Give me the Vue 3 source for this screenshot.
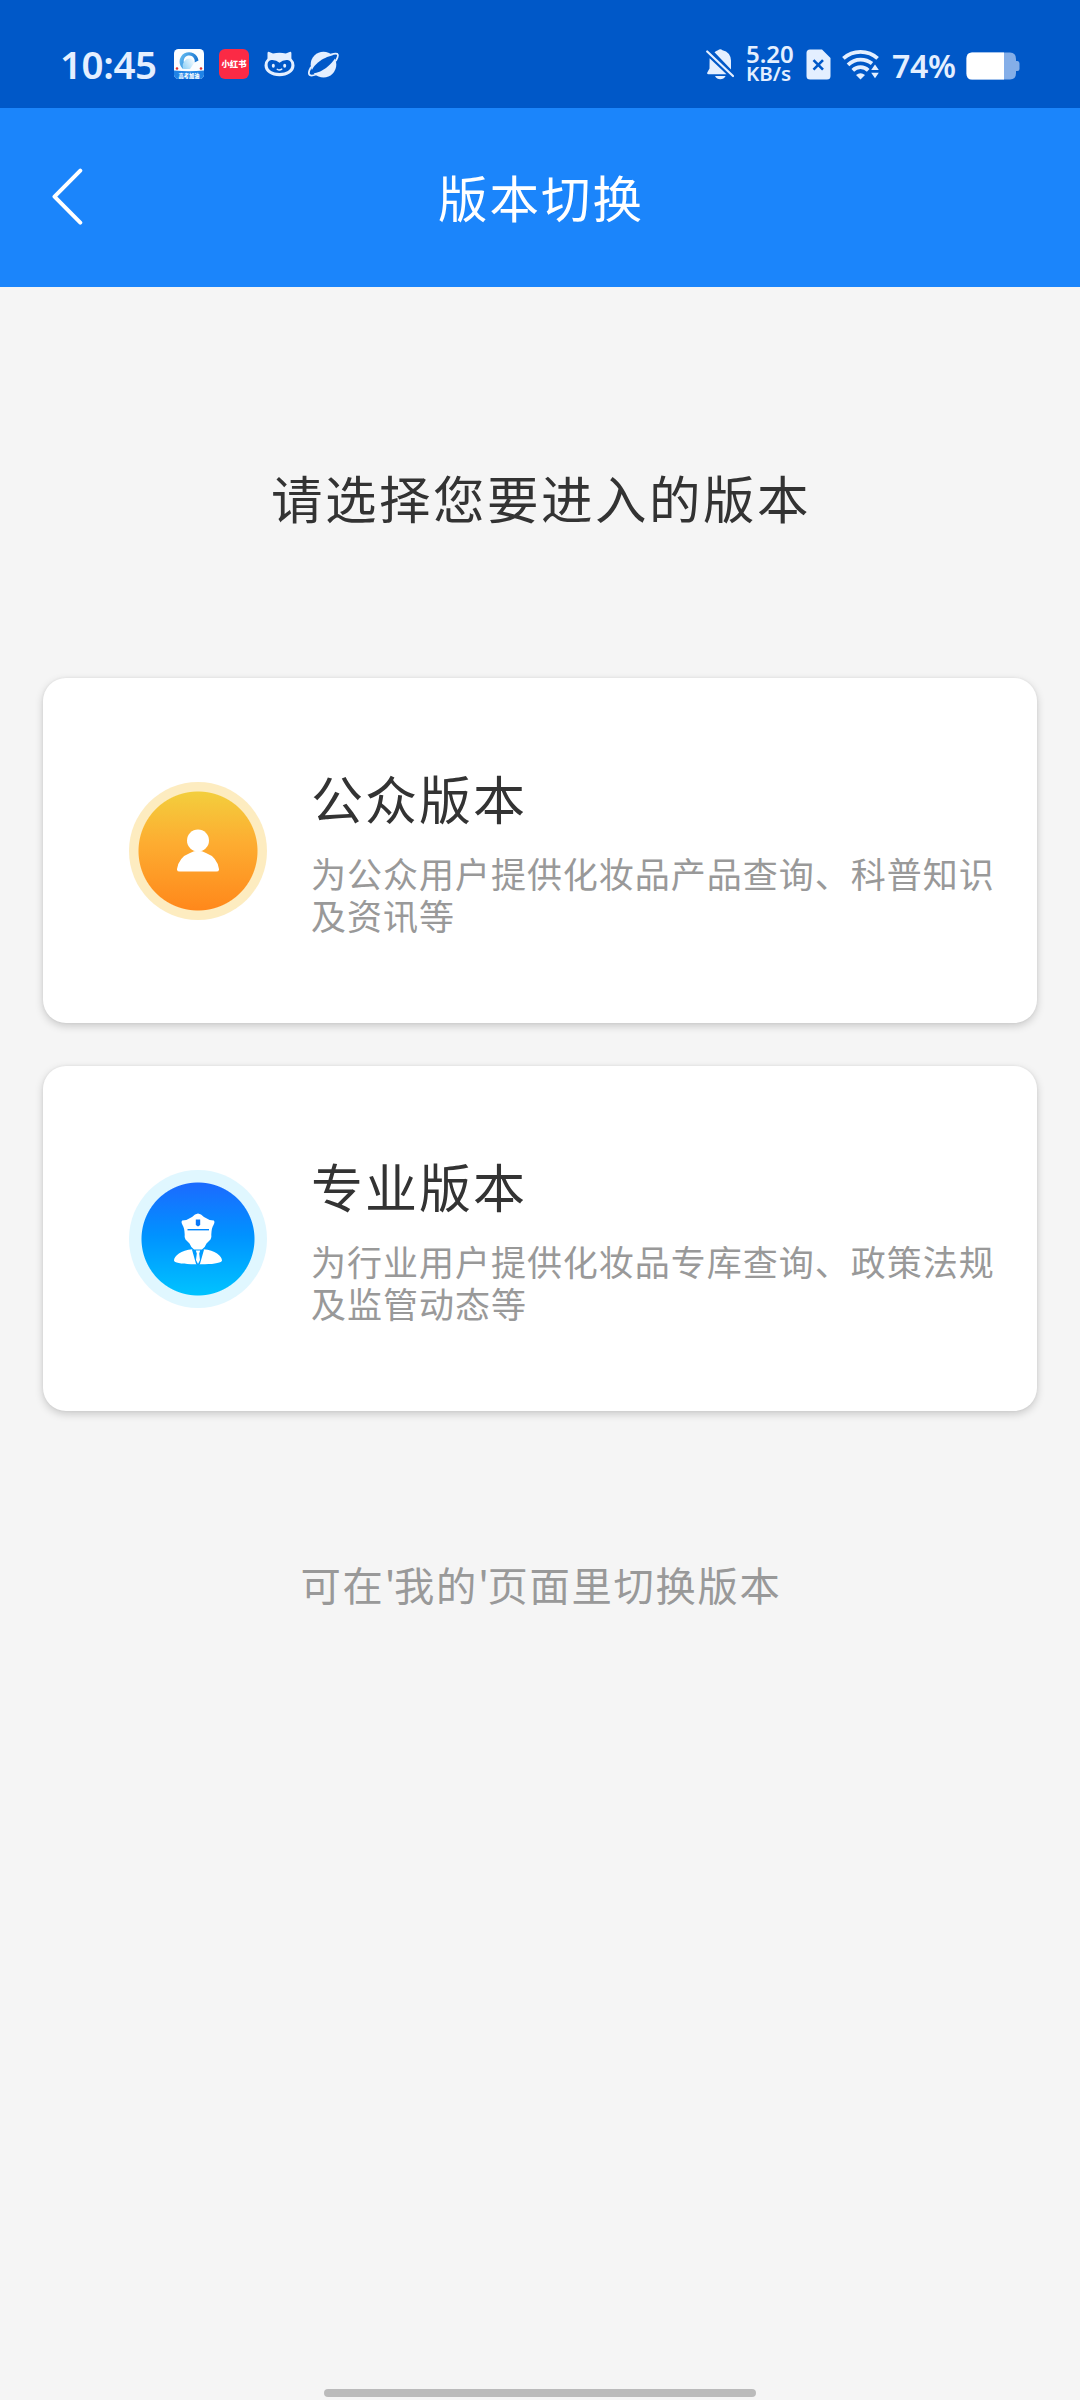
<script setup>
const versions = [
  {
    kind: 'public',
    title: '公众版本',
    desc: '为公众用户提供化妆品产品查询、科普知识及资讯等',
  },
  {
    kind: 'pro',
    title: '专业版本',
    desc: '为行业用户提供化妆品专库查询、政策法规及监管动态等',
  },
]
</script>

<template>
  <div class="page">
    <div class="status">
      <div class="group">
        <span class="time">10:45</span>
        <svg class="app" width="30" height="30" viewBox="0 0 30 30">
          <defs>
            <clipPath id="appClip"><rect width="30" height="30" rx="4.5" /></clipPath>
            <linearGradient id="ring" x1="0" y1="0" x2="1" y2="0.4">
              <stop offset="0" stop-color="#6cc3f5" />
              <stop offset="1" stop-color="#1673cf" />
            </linearGradient>
            <linearGradient id="swirl" x1="1" y1="0" x2="0" y2="0.6">
              <stop offset="0" stop-color="#fff" />
              <stop offset="1" stop-color="#9ad6f8" />
            </linearGradient>
          </defs>
          <g clip-path="url(#appClip)">
            <rect width="30" height="30" fill="#fbfdff" />
            <path d="M9 20A9.500 9.500 0 1 1 24.500 11.500L20.500 13.500A5.500 5.500 0 1 0 11 15.500z" fill="url(#ring)" />
            <path d="M9 20Q7.500 14 12 10.500A5.500 5.500 0 0 1 20.500 13.500L16 20z" fill="url(#swirl)" />
            <circle cx="3" cy="19.500" r="1.300" fill="#e0352f" />
            <circle cx="27" cy="19.500" r="1.300" fill="#e0352f" />
            <path d="M0 21.500Q15 23 30 21.500V30H0z" fill="#2083e6" />
            <text x="15" y="28.600" class="tiny" font-size="5.200" text-anchor="middle" fill="#fff">高考加油</text>
          </g>
        </svg>
        <svg class="red" width="30" height="30" viewBox="0 0 30 30">
          <rect width="30" height="30" rx="6" fill="#fb2a45" />
          <text x="15" y="18.400" class="tiny" font-size="8.400" text-anchor="middle" fill="#fff">小红书</text>
        </svg>
        <svg class="cat" width="31" height="26" viewBox="0 0 31 26">
          <path
            d="M3.500 2.200Q3.600.4 5.300 1L9 2.600Q15.500 1 21.800 2.600L25.600 1Q27.300.4 27.400 2.200V7.500Q30.500 10.500 30.500 14.500C30.500 21 23.500 25.200 15.500 25.200S.5 21 .5 14.500Q.5 10.500 3.500 7.500z"
            fill="#e4efff"
          />
          <path d="M3.600 14C3.600 10 6 9 8.500 9Q12.500 9.300 15.500 11.800Q18.500 9.300 22.500 9C25 9 27.400 10 27.400 14C27.400 19.200 22 22 15.500 22S3.600 19.200 3.600 14z" fill="#0058c8" />
          <ellipse cx="9.300" cy="14.800" rx="1.500" ry="2" fill="#e4efff" />
          <ellipse cx="20.700" cy="14.800" rx="1.500" ry="2" fill="#e4efff" />
          <path d="M13.200 18.300q2.200 1.600 4.600-.2" fill="none" stroke="#e4efff" stroke-width="1.400" stroke-linecap="round" />
        </svg>
        <svg class="planet" width="31" height="28" viewBox="0 0 31 28">
          <circle cx="15.500" cy="13.600" r="12.800" fill="#e4efff" />
          <path d="M28 9.500C30 6 30.600 3.800 29.300 2.900Q27.500 2 23.500 3.300M2.800 16.500C.8 20 .5 23 1.700 24.100Q3.600 25.300 8 23.500" fill="none" stroke="#e4efff" stroke-width="1.800" stroke-linecap="round" />
          <path d="M27.200 5.100C28.400 7.200 23.500 12.700 18 16.900C12.500 21 5.400 23.200 3.900 21.300C2.600 19.200 6.400 14.200 12 10C17.500 5.900 25.700 3.200 27.200 5.100z" fill="#0058c8" />
        </svg>
      </div>
      <div class="group">
        <svg width="28" height="31" viewBox="0 0 28 31">
          <path d="M8.500 3.200Q10.300 1.600 12 1.300Q14.300-.8 16.500 1.300Q24.500 3.200 25 11.500V20.500zM3.600 9.200L3.500 19.500L1.300 23.400Q.6 25.300 2.500 25.300H20.500zM9 27H19.600Q17.800 30.200 14.300 30.200T9 27z" fill="#e4efff" />
          <path d="M1.200 2.500L27 27" stroke="#e4efff" stroke-width="2.200" stroke-linecap="round" />
        </svg>
        <div class="speed">5.20<br /><span class="unit">KB/s</span></div>
        <svg class="sim" width="25" height="31" viewBox="0 0 25 31">
          <path d="M4 .5H16L24.500 9V27Q24.500 30.500 21 30.500H4Q.5 30.500.5 27V4Q.5.5 4 .5z" fill="#e4efff" />
          <path d="M7.500 11.200L17 20.600M17 11.200L7.500 20.600" stroke="#0058c8" stroke-width="2.600" />
        </svg>
        <svg class="wifi" width="38" height="31" viewBox="0 0 38 31">
          <g fill="none" stroke="#e4efff" stroke-width="3.800">
            <path d="M1.400 9.300Q8.500 2.800 18.500 2.800T35.600 9.300" />
            <path d="M6 15.800Q11.500 10.600 18.500 10.600Q25 10.600 30 14.600" />
            <path d="M10.800 21.300Q14 18.200 18.500 18.200T26.200 21.300" />
          </g>
          <path d="M14 26Q18.500 22.500 23 26L18.500 30.500z" fill="#e4efff" />
          <path d="M33 15.600L36.800 21H29.200zM33 29.200L36.800 23.800H29.200z" fill="#e4efff" />
        </svg>
        <span class="percent">74%</span>
        <svg class="battery" width="54" height="28" viewBox="0 0 54 28">
          <path d="M6 .5H44Q50 .5 50 7V9H51.500Q53.500 9.300 53.500 11.500V17Q53.500 19 51.500 19H50V21Q50 27.500 44 27.500H6Q.5 27.500.5 21.500V6.500Q.5.5 6 .5z" fill="#84aee8" />
          <path d="M6 .5H38V27.500H6Q.5 27.500.5 21.500V6.500Q.5.5 6 .5z" fill="#fff" />
        </svg>
      </div>
    </div>

    <header class="nav">
      <svg class="back" width="34" height="60" viewBox="0 0 34 60">
        <path d="M29.300 2.600L3.500 28.600L29.300 54.600" fill="none" stroke="#fff" stroke-width="4" stroke-linecap="round" stroke-linejoin="round" />
      </svg>
      <h1>版本切换</h1>
    </header>

    <main>
      <h2>请选择您要进入的版本</h2>
      <section v-for="v in versions" :key="v.kind" class="card">
        <div class="badge" :class="v.kind">
          <svg v-if="v.kind === 'public'" width="42" height="43" viewBox="0 0 42 43">
            <circle cx="21" cy="11.500" r="11" fill="#fff" />
            <path d="M13 24Q21 19.500 29 24Q40 28 42 40Q42.200 42.600 39.500 42.600H2.500Q-.2 42.600 0 40Q2 28 13 24z" fill="#fff" />
          </svg>
          <svg v-else width="50" height="52" viewBox="0 0 50 52">
            <path d="M25 .5Q28 .5 31 4Q36 7.500 40.800 7.500Q42.200 9 40.500 12Q38.500 15 38.300 21.500Q38.800 24 37.500 26.500L33.500 30.500Q32 34.500 29 36.500H21Q18 34.500 16.500 30.500L12.500 26.500Q11.200 24 11.700 21.500Q11.500 15 9.500 12Q7.800 9 9.200 7.500Q14 7.500 19 4Q22 .5 25 .5z" fill="#fff" />
            <path d="M14.500 16.700H36" stroke="#0087ff" stroke-width="1.400" />
            <path d="M22.800 6.500H27.200V11.500Q27 12.800 25 13.400Q23 12.800 22.800 11.500z" fill="#0a78f8" />
            <path d="M19.500 36.200L24 51.200H18C8 51.200 1 49.500 1 47.500C1 43 8 37 19.500 36.200zM30.500 36.200L26 51.200H32C42 51.200 49 49.500 49 47.500C49 43 42 37 30.500 36.200z" fill="#fff" />
            <path d="M18.800 36L23.200 51.400H26.800L31.200 36L28 37.500H22z" fill="#009cff" />
            <path d="M22.800 37.500H27.200L26.200 40.500L27 47L25 51L23 47L23.800 40.500z" fill="#fff" />
          </svg>
        </div>
        <div class="info">
          <h3>{{ v.title }}</h3>
          <p>{{ v.desc }}</p>
        </div>
      </section>
      <p class="hint">可在<span class="quote">'</span>我的<span class="quote">'</span>页面里切换版本</p>
    </main>

    <div class="home"></div>
  </div>
</template>

<style>
body {
  background: #f5f5f5;
}
</style>

<style scoped>
.page {
  width: 1080px;
  height: 2400px;
  display: flex;
  flex-direction: column;
  background: #f5f5f5;
  overflow: hidden;
  font-family: "Noto Sans CJK SC", sans-serif;
}
h1, h2, h3, p {
  margin: 0;
  font-weight: 400;
}
svg {
  display: block;
  flex: none;
}
.status {
  height: 108px;
  flex: none;
  box-sizing: border-box;
  padding: 20px 60px 0 60px;
  display: flex;
  justify-content: space-between;
  align-items: center;
  background: #0058c8;
  color: #e4efff;
  font-family: "Noto Sans", sans-serif;
  font-weight: 600;
}
.group {
  display: flex;
  align-items: center;
  height: 88px;
}
.time {
  width: 114px;
  font-size: 38.5px;
  line-height: 40px;
  letter-spacing: -0.4px;
}
.tiny {
  font-family: "Noto Sans CJK SC", sans-serif;
  font-weight: 900;
}
.red {
  margin-left: 15px;
}
.cat {
  margin-left: 15px;
}
.planet {
  margin-left: 13px;
  margin-top: 1px;
}
.speed {
  width: 60px;
  margin-left: 12px;
  margin-top: -1px;
  font-size: 24px;
  line-height: 18px;
}
.unit {
  font-size: 20.5px;
}
.wifi {
  margin-left: 11px;
}
.percent {
  width: 74px;
  margin: 4px 0 0 12px;
  font-size: 32px;
  line-height: 40px;
  letter-spacing: -0.3px;
}
.battery {
  margin-top: 3px;
}
.nav {
  height: 179px;
  flex: none;
  display: grid;
  grid-template-columns: 120px 1fr 120px;
  align-items: center;
  background: #1b85fb;
}
.back {
  margin-left: 51px;
}
h1 {
  margin-top: -1px;
  padding-left: 2px;
  text-align: center;
  font-size: 49.5px;
  line-height: 60px;
  letter-spacing: 2px;
  color: #fff;
}
main {
  flex: 1;
  padding: 0 43px;
}
h2 {
  margin: 174px 0 145px;
  padding-left: 2px;
  text-align: center;
  font-size: 51.5px;
  line-height: 72px;
  letter-spacing: 2.5px;
  color: #333;
}
.card {
  height: 345px;
  margin-bottom: 43px;
  border-radius: 23px;
  background: #fff;
  box-shadow: 0 3px 8px rgba(0, 0, 0, 0.18), 0 0 3px rgba(0, 0, 0, 0.06);
  display: flex;
  align-items: center;
}
.badge {
  width: 138px;
  height: 138px;
  margin-left: 86px;
  box-sizing: border-box;
  border-radius: 50%;
  display: flex;
  align-items: center;
  justify-content: center;
  flex: none;
}
.badge.public {
  background: radial-gradient(circle, transparent 59px, #fdecc0 60px), linear-gradient(#f3ce3d 10px, #fdad31 60px, #ff881b 128px);
}
.badge.pro {
  background: radial-gradient(circle, transparent 56px, #e0f7ff 57px), linear-gradient(#1b6bff 14px, #0092ff 65px, #00c2ff 124px);
}
.info {
  width: 700px;
  margin-left: 44px;
  margin-top: -5px;
}
h3 {
  font-size: 52px;
  line-height: 76px;
  margin-bottom: 16px;
  letter-spacing: 2px;
  color: #333;
}
.info p {
  font-size: 35px;
  line-height: 42px;
  letter-spacing: 0.98px;
  color: #999;
}
.hint {
  margin-top: 143px;
  padding-left: 2px;
  text-align: center;
  font-size: 40.3px;
  line-height: 60px;
  letter-spacing: 1.7px;
  color: #999;
}
.quote {
  letter-spacing: -1.6px;
}
.home {
  width: 432px;
  height: 8px;
  margin: 0 auto 3px;
  border-radius: 4px;
  background: #bbb;
}
</style>
